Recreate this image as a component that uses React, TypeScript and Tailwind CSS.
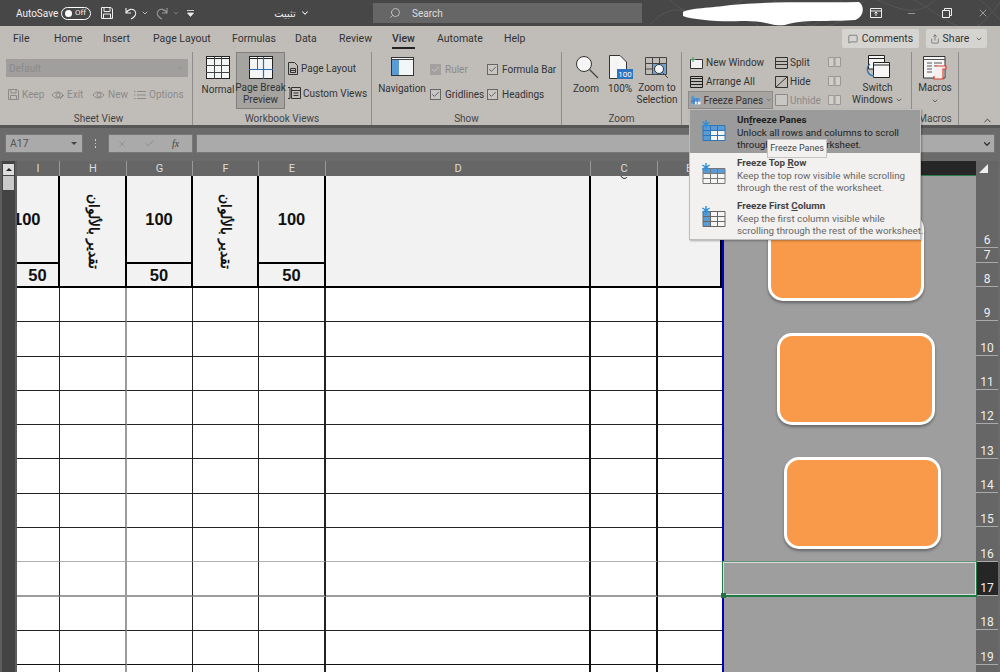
import React from 'react';
import { ChevronDown, Check, X, Search, Minus, MessageSquare, Share, ChevronUp } from 'lucide-react';

const GridIcon = ({ breakLines }: { breakLines?: boolean }) => (
  <svg width="24" height="23" viewBox="0 0 24 23" className="block">
    <rect x="0.5" y="0.5" width="23" height="22" fill="#f4f6f5" stroke="#222" />
    <path d="M0.5 2.5H23.5" stroke="#222" />
    {breakLines ? (
      <>
        <path d="M8.5 1V13" stroke="#333" strokeWidth="0.8" fill="none" />
        <path d="M14.5 1V23M0 13.5H24" stroke="#2d6db5" strokeWidth="1.2" fill="none" />
      </>
    ) : (
      <path d="M8.5 1V23M15.5 1V23M0 9.5H24M0 16.5H24" stroke="#444" fill="none" />
    )}
  </svg>
);

const CheckRow = ({ label, on = true, dim }: { label: string; on?: boolean; dim?: boolean }) => (
  <div className={`flex items-center gap-[4px] h-[25px] ${dim ? 'text-[#8c8a88]' : ''}`}>
    <span className={`w-[11px] h-[11px] border flex items-center justify-center ${dim ? 'bg-[#a3a19f] border-[#a3a19f]' : 'border-[#666] bg-[#c9c7c4]'}`}>
      {on && <Check size={9} strokeWidth={2} color={dim ? '#d0cecc' : '#444'} />}
    </span>
    <span>{label}</span>
  </div>
);

const Group = ({ label, width, children }: { label: string; width: string; children: React.ReactNode }) => (
  <div className={`${width} h-[73px] border-r border-[#8f8d8b] relative shrink-0`}>
    <div className="flex h-[58px]">{children}</div>
    <div className="absolute bottom-0 left-0 right-0 text-center text-[10px] leading-[12px] text-[#444]">{label}</div>
  </div>
);

const FreezeIcon = ({ kind }: { kind: 'all' | 'row' | 'col' }) => {
  const blue = '#5a9bd5';
  const stroke = kind === 'col' ? '#666' : kind === 'row' ? '#777' : '#2e75b6';
  return (
    <svg width="27" height="22" viewBox="0 0 27 22" className="block">
      <rect x="3" y="5.5" width="22" height="15" fill="#f5f5f3" />
      {kind !== 'col' && <rect x="3" y="5.5" width="22" height="5" fill={blue} />}
      {kind !== 'row' && <rect x="3" y="5.5" width="7.5" height="15" fill={blue} />}
      <path d="M3 5.5H25V20.5H3ZM10.5 5.5V20.5M17.5 5.5V20.5M3 10.5H25M3 15.5H25" stroke={stroke} fill="none" />
      <path d="M6 0V8.5M2.3 2L9.7 6.3M9.7 2L2.3 6.3" stroke="#2e8fd8" strokeWidth="1.4" />
    </svg>
  );
};

const MenuItem = ({ title, lines, kind, hot }: { title: React.ReactNode; lines: string[]; kind: 'all' | 'row' | 'col'; hot?: boolean }) => (
  <div className={`h-[43px] flex pt-[4px] ${hot ? 'bg-[#9b9b9b]' : ''}`}>
    <div className="w-[47px] pl-[10px] pt-[6px] shrink-0">
      <FreezeIcon kind={kind} />
    </div>
    <div className="text-[9.8px] leading-[12px]">
      <div className={`font-bold mb-[1px] ${hot ? 'text-[#222]' : 'text-[#444]'}`}>{title}</div>
      {lines.map(l => (
        <div key={l} className={`whitespace-nowrap ${hot ? 'text-[#222]' : 'text-[#666]'}`}>{l}</div>
      ))}
    </div>
  </div>
);

const tabs = [
  { label: 'File', w: 'w-[41px]' },
  { label: 'Home', w: 'w-[49px]' },
  { label: 'Insert', w: 'w-[50px]' },
  { label: 'Page Layout', w: 'w-[79px]' },
  { label: 'Formulas', w: 'w-[63px]' },
  { label: 'Data', w: 'w-[44px]' },
  { label: 'Review', w: 'w-[53px]' },
  { label: 'View', w: 'w-[45px]', on: true },
  { label: 'Automate', w: 'w-[67px]' },
  { label: 'Help', w: 'w-[30px]' },
];

const columns = [
  { label: 'I', w: 'w-[43px]' },
  { label: 'H', w: 'w-[67px]' },
  { label: 'G', w: 'w-[66px]' },
  { label: 'F', w: 'w-[66px]' },
  { label: 'E', w: 'w-[67px]' },
  { label: 'D', w: 'w-[265px]' },
  { label: 'C', w: 'w-[67px]' },
  { label: 'B', w: 'w-[64px]' },
];

// per column right border for the body rows
const bodyBorders = [
  'border-r border-r-[#222]',
  'border-r-2 border-r-[#9c9c9c]',
  'border-r border-r-[#222]',
  'border-r border-r-[#222]',
  'border-r-2 border-r-[#222]',
  'border-r-2 border-r-[#111]',
  'border-r-2 border-r-[#111]',
  '',
];

const rowLines = ['border-b-[#222]', 'border-b-[#222]', 'border-b-[#222]', 'border-b-[#222]', 'border-b-[#222]', 'border-b-[#222]', 'border-b-[#222]', 'border-b-[#b0b0b0]', 'border-b-2 border-b-[#9c9c9c]', 'border-b-[#222]', 'border-b-[#111]', 'border-b-[#222]'];

const rowHeads = [
  { n: '8', h: 'h-[24px]' },
  { n: '9', h: 'h-[34px]' },
  { n: '10', h: 'h-[35px]' },
  { n: '11', h: 'h-[34px]' },
  { n: '12', h: 'h-[34px]' },
  { n: '13', h: 'h-[35px]' },
  { n: '14', h: 'h-[34px]' },
  { n: '15', h: 'h-[34px]' },
  { n: '16', h: 'h-[35px]' },
  { n: '17', h: 'h-[34px]', on: true },
  { n: '18', h: 'h-[34px]' },
  { n: '19', h: 'h-[35px]' },
];

const headCell = 'bg-[#f2f2f2] border-r-2 border-b-2 border-[#000] flex items-center justify-center font-bold text-[#111] overflow-hidden';

const Shape = ({ cls }: { cls: string }) => (
  <div className={`absolute ${cls} bg-[#f99a4a] border-[3px] border-white rounded-[15px] shadow-[0_2px_3px_rgba(0,0,0,0.35)]`} />
);

export default function App() {
  return (
    <div className="relative w-[1000px] h-[672px] overflow-hidden flex flex-col bg-[#666] font-['Roboto','Open_Sans',sans-serif] text-[10px] text-[#333]">
      {/* title bar */}
      <div className="relative h-[26px] shrink-0 bg-[#474747] flex items-center text-[#f0f0f0] overflow-hidden">
        <svg width="350" height="26" viewBox="0 0 350 26" className="absolute right-0 top-0" fill="none" stroke="#565656">
          <path d="M0 25C30 -10 50 30 80 8S120 -5 140 14 190 30 210 5 260 -5 290 16 330 30 350 2" />
          <path d="M20 0C50 30 70 -5 100 20S170 30 190 2 250 28 280 4 330 -4 350 20" />
        </svg>
        <span className="ml-[16px] w-[45px]">AutoSave</span>
        <span className="w-[30px] h-[13px] border border-white rounded-full flex items-center pl-[3px] gap-[3px] text-[8px]">
          <span className="w-[7px] h-[7px] rounded-full bg-white" />Off
        </span>
        <svg width="14" height="14" viewBox="0 0 14 14" fill="none" stroke="#eee" className="ml-[9px]">
          <path d="M1.5 1.5H11L12.5 3V12.5H1.5ZM4 1.5V5.5H10V1.5M3.5 12.5V8H10.5V12.5" />
        </svg>
        <svg width="14" height="14" viewBox="0 0 14 14" fill="none" stroke="#eee" className="ml-[10px]">
          <path d="M2 2V7H7M2 7C4 3 9 2 11 5S11 11 7 13" strokeWidth="1.1" />
        </svg>
        <ChevronDown size={8} className="ml-[3px]" />
        <svg width="14" height="14" viewBox="0 0 14 14" fill="none" stroke="#999" className="ml-[6px]">
          <path d="M12 2V7H7M12 7C10 3 5 2 3 5S3 11 7 13" strokeWidth="1.1" />
        </svg>
        <ChevronDown size={8} className="ml-[3px] text-[#999]" />
        <svg width="9" height="9" viewBox="0 0 9 9" className="ml-[6px]">
          <path d="M1 1.5H8M1.5 4H7.5L4.5 7.5Z" stroke="#eee" strokeWidth="0.8" fill="#eee" />
        </svg>
        <span className="ml-[76px] w-[28px] text-center font-['Noto_Sans','DejaVu_Sans',sans-serif]" dir="rtl">تثبيت</span>
        <ChevronDown size={10} strokeWidth={2.5} className="ml-[1px]" />
        <div className="ml-[63px] w-[269px] h-[20px] bg-[#666] flex items-center text-[#ddd] shrink-0 relative">
          <Search size={12} className="ml-[16px] -scale-x-100" strokeWidth={1.4} />
          <span className="ml-[11px]">Search</span>
        </div>
        <svg width="184" height="26" viewBox="0 0 184 26" className="ml-[39px] shrink-0 relative">
          <path d="M2 12C8 8 30 8 50 5 90 1 130 3 178 2 184 6 183 17 174 20 150 22 120 19 104 25 90 27 86 20 60 21 40 22 12 20 2 16Z" fill="#fff" />
        </svg>
        <svg width="12" height="10" viewBox="0 0 12 10" fill="none" stroke="#eee" className="ml-[5px] shrink-0 relative">
          <path d="M0.5 0.5H11.5V9.5H0.5ZM0.5 3H11.5M6 4V8M4.5 5.5L6 4 7.5 5.5" />
        </svg>
        <Minus size={11} className="ml-[24px] shrink-0 relative" strokeWidth={1} />
        <svg width="10" height="10" viewBox="0 0 10 10" fill="none" stroke="#eee" className="ml-[25px] shrink-0 relative">
          <path d="M0.5 2.5H7.5V9.5H0.5ZM2.5 2.5V0.5H9.5V7.5H7.5" />
        </svg>
        <X size={12} className="ml-[25px] shrink-0 relative" strokeWidth={1} />
      </div>

      {/* ribbon */}
      <div className="h-[99px] shrink-0 bg-[#c0bdb9] relative">
        <div className="h-[26px] flex items-center pl-[13px] text-[10.5px] text-[#333]">
          {tabs.map(t => (
            <div key={t.label} className={t.w}>
              <span className={t.on ? 'relative font-medium' : ''}>
                {t.label}
                {t.on && <span className="absolute left-0 right-0 bottom-[-4px] h-[2px] bg-[#222]" />}
              </span>
            </div>
          ))}
          <div className="absolute left-[842px] top-[3px] flex items-center gap-[7px] text-[10.5px]">
            <div className="w-[77px] h-[19px] bg-[#d6d4d1] rounded-[2px] flex items-center justify-center gap-[4px]">
              <MessageSquare size={10} strokeWidth={1.2} />Comments
            </div>
            <div className="w-[61px] h-[19px] bg-[#d6d4d1] rounded-[2px] flex items-center justify-center gap-[3px]">
              <Share size={10} strokeWidth={1.2} />Share
              <ChevronDown size={8} className="ml-[3px]" />
            </div>
          </div>
        </div>

        <div className="flex pl-[5px] h-[73px]">
          <Group label="Sheet View" width="w-[188px]">
            <div className="pl-[1px] pt-[7px] text-[#8c8a88]">
              <div className="w-[182px] h-[18px] bg-[#a09f9d] flex items-center justify-between pl-[3px] pr-[4px]">
                Default <ChevronDown size={8} />
              </div>
              <div className="flex items-center mt-[9px] h-[17px] pl-[1px]">
                <span className="flex items-center gap-[2px] w-[44px]">
                  <svg width="13" height="13" viewBox="0 0 13 13" fill="none" stroke="#8c8a88"><path d="M1.5 1.5H10L11.5 3V11.5H1.5ZM4 1.5V5H9V1.5M3.5 11.5V7.5H9.5V11.5" /></svg>Keep
                </span>
                <span className="flex items-center gap-[2px] w-[41px]">
                  <svg width="14" height="10" viewBox="0 0 14 10" fill="none" stroke="#8c8a88"><path d="M1 5C4 1 9 1 12 5 9 9 4 9 1 5Z" /><circle cx="7" cy="5" r="2" /><path d="M9 9L13 5" /></svg>Exit
                </span>
                <span className="flex items-center gap-[2px] w-[42px]">
                  <svg width="14" height="10" viewBox="0 0 14 10" fill="none" stroke="#8c8a88"><path d="M1 5C4 1 9 1 12 5 9 9 4 9 1 5Z" /><circle cx="7" cy="5" r="2" /></svg>New
                </span>
                <span className="flex items-center gap-[3px]">
                  <svg width="12" height="10" viewBox="0 0 12 10" fill="none" stroke="#8c8a88"><path d="M3 1.5H12M3 5H12M3 8.5H12M0 1.5H1.5M0 5H1.5M0 8.5H1.5" /></svg>Options
                </span>
              </div>
            </div>
          </Group>
          <Group label="Workbook Views" width="w-[179px]">
            <div className="w-[36px] ml-[7px] flex flex-col items-center pt-[4px]">
              <GridIcon />
              <span className="mt-[3px]">Normal</span>
            </div>
            <div className="w-[49px] h-[57px] bg-[#a5a4a1] border border-[#807f7d] flex flex-col items-center pt-[3px] leading-[12px] text-center">
              <GridIcon breakLines />
              <span className="mt-[3px] whitespace-nowrap">Page Break</span>
              <span>Preview</span>
            </div>
            <div className="pl-[3px] pt-[7px]">
              <div className="flex items-center gap-[3px] h-[18px]">
                <svg width="10" height="13" viewBox="0 0 10 13" fill="none" stroke="#333"><path d="M0.5 0.5H6.5L9.5 3.5V12.5H0.5ZM2.5 6.5H7.5V10.5H2.5ZM2.5 8.5H7.5" /></svg>Page Layout
              </div>
              <div className="flex items-center gap-[2px] h-[18px] mt-[7px]">
                <svg width="13" height="14" viewBox="0 0 13 14" fill="none" stroke="#333"><path d="M3.5 1.5H12.5V12.5H3.5ZM3.5 4.5H12.5M5.5 7H10.5M5.5 9.5H10.5M0 1.5H2V12.5H0" /></svg>Custom Views
              </div>
            </div>
          </Group>
          <Group label="Show" width="w-[190px]">
            <div className="w-[46px] ml-[7px] flex flex-col items-center pt-[5px]">
              <svg width="23" height="19" viewBox="0 0 23 19"><rect x="0.5" y="0.5" width="22" height="18" fill="#f3f6f6" stroke="#333" /><rect x="1" y="3" width="7" height="15" fill="#5b9bd5" /><path d="M1 2.5H22" stroke="#444" /></svg>
              <span className="mt-[5px] whitespace-nowrap">Navigation</span>
            </div>
            <div className="ml-[5px] pt-[5px] w-[57px]">
              <CheckRow label="Ruler" dim />
              <CheckRow label="Gridlines" />
            </div>
            <div className="pt-[5px]">
              <CheckRow label="Formula Bar" />
              <CheckRow label="Headings" />
            </div>
          </Group>
          <Group label="Zoom" width="w-[120px]">
            <div className="w-[30px] ml-[9px] flex flex-col items-center pt-[3px]">
              <svg width="24" height="24" viewBox="0 0 24 24" fill="none" className="ml-[2px]"><circle cx="9" cy="9" r="7.5" fill="#f5f5f5" stroke="#333" /><path d="M14.5 14.5L23 23" stroke="#444" strokeWidth="1.2" /></svg>
              <span className="mt-[2px]">Zoom</span>
            </div>
            <div className="w-[28px] ml-[5px] flex flex-col items-center pt-[3px]">
              <svg width="24" height="24" viewBox="0 0 24 24" className="ml-[2px]">
                <path d="M0.5 0.5H11L17.5 7V23.5H0.5Z" fill="#f6f6f6" stroke="#333" />
                <rect x="8" y="14" width="16" height="10" fill="#2f74c0" />
                <text x="16" y="22" textAnchor="middle" fontSize="8" fill="#fff">100</text>
              </svg>
              <span className="mt-[2px]">100%</span>
            </div>
            <div className="w-[40px] ml-[3px] flex flex-col items-center pt-[5px] leading-[12px] text-center">
              <svg width="24" height="22" viewBox="0 0 24 22" fill="none"><path d="M0.5 0.5H21.5V17.5H0.5ZM0.5 6.5H21.5M7.5 0.5V17.5M14.5 0.5V6.5M0.5 12H8" stroke="#444" /><rect x="8" y="7" width="13" height="10" fill="#6ea3d8" /><circle cx="14" cy="12" r="4.5" fill="#f5f5f5" stroke="#333" /><path d="M17.5 15.5L23 21" stroke="#444" /></svg>
              <span className="mt-[3px] whitespace-nowrap">Zoom to</span>
              <span>Selection</span>
            </div>
          </Group>
          <Group label="" width="w-[230px]">
            <div className="w-[85px] ml-[6px] pt-[1px]">
              <div className="flex items-center gap-[3px] h-[19px] pl-[2px]">
                <svg width="13" height="12" viewBox="0 0 13 12" fill="none"><path d="M0.5 2.5H12.5V11.5H0.5Z" fill="#f3f3f3" stroke="#333" /><path d="M3 0V5M0.5 2.5H5.5" stroke="#3a9c55" /></svg>New Window
              </div>
              <div className="flex items-center gap-[3px] h-[19px] pl-[2px]">
                <svg width="13" height="12" viewBox="0 0 13 12" fill="none" stroke="#222"><path d="M0.5 0.5H12.5V11.5H0.5ZM0.5 2.5H12.5M0.5 5.5H12.5M0.5 8.5H12.5" /></svg>Arrange All
              </div>
              <div className="flex items-center gap-[3px] h-[18px] pl-[2px] bg-[#a5a4a1] border border-[#8c8b89] whitespace-nowrap">
                <svg width="13" height="12" viewBox="0 0 13 12" fill="none"><rect x="0" y="3" width="13" height="9" fill="#f5f5f5" /><path d="M0 3H13V7H5V12H0Z" fill="#5b9bd5" /><path d="M4.5 3V12M8.5 3V12M0 7.5H13" stroke="#2d6db5" /><path d="M2.5 0V4M0.5 2H4.5" stroke="#2e8fd8" /></svg>
                Freeze Panes <ChevronDown size={8} />
              </div>
            </div>
            <div className="w-[51px] ml-[2px] pt-[1px]">
              <div className="flex items-center gap-[2px] h-[19px]">
                <svg width="13" height="12" viewBox="0 0 13 12" fill="none" stroke="#333"><path d="M0.5 0.5H12.5V11.5H0.5ZM0.5 4.5H12.5M0.5 7.5H12.5" /></svg>Split
              </div>
              <div className="flex items-center gap-[2px] h-[19px]">
                <svg width="13" height="12" viewBox="0 0 13 12" fill="none" stroke="#333"><path d="M0.5 0.5H12.5V11.5H0.5ZM1 11L12 1" /></svg>Hide
              </div>
              <div className="flex items-center gap-[2px] h-[18px] text-[#8c8a88]">
                <svg width="13" height="12" viewBox="0 0 13 12" fill="#c9c7c4" stroke="#8c8a88"><path d="M0.5 0.5H12.5V11.5H0.5Z" /></svg>Unhide
              </div>
            </div>
            <div className="w-[24px] ml-[2px] pt-[3px] flex flex-col gap-[7px]">
              {[0, 1, 2].map(i => (
                <svg key={i} width="13" height="12" viewBox="0 0 13 12" fill="#d0cecb" stroke="#9a9896"><path d="M0.5 2.5H6V11.5H0.5ZM7 2.5H12.5V11.5H7Z" /></svg>
              ))}
            </div>
            <div className="w-[51px] flex flex-col items-center pt-[3px] leading-[12px] text-center">
              <svg width="24" height="25" viewBox="0 0 24 25" fill="none"><path d="M2.5 0.5H18.5V14H2.5ZM2.5 3.5H18.5" fill="#f5f5f5" stroke="#222" /><path d="M7.5 7.5H23.5V22.5H7.5Z" fill="#f5f5f5" stroke="#222" /><path d="M7.5 10H23.5" stroke="#222" /><path d="M4 9C0 12 0 20 8 21" stroke="#2e75b6" strokeWidth="1.3" /></svg>
              <span className="mt-[2px]">Switch</span>
              <span className="flex items-center gap-[2px] whitespace-nowrap">Windows <ChevronDown size={8} /></span>
            </div>
          </Group>
          <Group label="Macros" width="w-[47px]">
            <div className="w-full flex flex-col items-center pt-[4px] leading-[12px]">
              <svg width="24" height="24" viewBox="0 0 24 24" fill="none"><path d="M0.5 0.5H22V22H0.5Z" fill="#f5f5f5" stroke="#333" /><path d="M0.5 3.5H22M4 7H9M11 7H19M4 10H9M11 10H14M4 13H9M4 16H9" stroke="#555" /><path d="M12 10H23V13H20V23H11V20" fill="#f5f0ef" stroke="#d8402c" strokeWidth="1.2" /></svg>
              <span className="mt-[2px]">Macros</span>
              <ChevronDown size={8} className="mt-[3px]" />
            </div>
          </Group>
        </div>
        <ChevronUp size={11} className="absolute left-[982px] top-[89px] text-[#333]" />
      </div>

      {/* formula bar */}
      <div className="h-[36px] shrink-0 bg-[#6b6b6b] border-t-[3px] border-[#565656] flex items-start pt-[6px] pl-[5px] text-[#555]">
        <div className="w-[78px] h-[19px] bg-[#aaa] border border-[#777] flex items-center justify-between pl-[4px] pr-[5px] text-[10.5px]">
          A17
          <span className="w-0 h-0 border-l-[3px] border-r-[3px] border-t-[3px] border-l-transparent border-r-transparent border-t-[#444]" />
        </div>
        <div className="w-[25px] h-[19px] flex flex-col items-center justify-center gap-[2px]">
          <span className="w-[1.5px] h-[1.5px] bg-[#ccc]" /><span className="w-[1.5px] h-[1.5px] bg-[#ccc]" /><span className="w-[1.5px] h-[1.5px] bg-[#ccc]" />
        </div>
        <div className="w-[85px] h-[19px] bg-[#aaa] border border-[#777] flex items-center pl-[8px] gap-[17px] text-[#888]">
          <X size={10} strokeWidth={1.6} />
          <Check size={11} strokeWidth={1.8} />
          <span className="font-['Liberation_Serif',serif] italic text-[#444] text-[10px] leading-none">fx</span>
        </div>
        <div className="ml-[3px] w-[799px] h-[19px] bg-[#aaa] border border-[#777] flex items-center justify-end pr-[2px]">
          <ChevronDown size={10} strokeWidth={3} className="text-[#333]" />
        </div>
      </div>

      {/* sheet */}
      <div className="flex-1 flex min-h-0">
        <div className="w-[17px] shrink-0 bg-[#444] border-l-[2px] border-r-[2px] border-[#5d5d5d] flex flex-col pt-[3px] items-center">
          <div className="w-[11px] h-[11px] bg-[#ddd] flex items-center justify-center">
            <span className="w-0 h-0 border-l-[3px] border-r-[3px] border-b-[3px] border-l-transparent border-r-transparent border-b-[#222]" />
          </div>
          <div className="w-[11px] h-[14px] mt-[1px] bg-[#c9c9c9]" />
        </div>
        <div className="w-[705px] shrink-0 flex flex-col">
          <div className="h-[15px] flex bg-[#666] text-[#ddd] text-[11px] leading-[15px]">
            {columns.map(c => (
              <div key={c.label} className={`${c.w} text-center border-r border-[#999]`}>{c.label}</div>
            ))}
          </div>
          <div className="flex-1 bg-white grid grid-cols-[43px_67px_66px_66px_67px_265px_67px_64px] grid-rows-[88px_24px] auto-rows-[34.3px] overflow-hidden font-['Liberation_Sans',sans-serif] text-[16.5px]">
            <div className={`${headCell} justify-start`}><span className="-ml-[4px]">100</span></div>
            <div className={`${headCell} row-span-2 text-[13.5px] [writing-mode:vertical-rl]`}>تقدير بالألوان</div>
            <div className={headCell}>100</div>
            <div className={`${headCell} row-span-2 text-[13.5px] [writing-mode:vertical-rl]`}>تقدير بالألوان</div>
            <div className={headCell}>100</div>
            <div className={`${headCell} row-span-2`} />
            <div className={`${headCell} row-span-2 relative`}>
              <svg width="8" height="4" viewBox="0 0 8 4" fill="none" stroke="#222" className="absolute top-0 left-[29px]"><path d="M1 0C2 3 6 3 7 1" /></svg>
            </div>
            <div className={`${headCell} row-span-2 border-r-0`} />
            <div className={headCell}>50</div>
            <div className={headCell}>50</div>
            <div className={headCell}>50</div>
            {rowLines.flatMap((line, r) =>
              bodyBorders.map((b, c) => (
                <div key={`${r}-${c}`} className={`border-b ${line} ${b}`} />
              ))
            )}
          </div>
        </div>

        <div className="w-[2px] shrink-0 bg-[#0000c8] mt-[15px]" />

        <div className="w-[252px] shrink-0 flex flex-col">
          <div className="h-[15px] shrink-0 bg-[#262626] border-b border-[#2e7d4f]" />
          <div className="flex-1 bg-[#9e9e9e] relative">
            <Shape cls="left-[44px] top-[38px] w-[156px] h-[87px]" />
            <Shape cls="left-[53px] top-[157px] w-[158px] h-[92px]" />
            <Shape cls="left-[60px] top-[281px] w-[157px] h-[92px]" />
            {/* selected row 17 */}
            <div className="absolute left-[-2px] right-[-1px] top-[385px] h-[36px] border border-[#5f8f75] border-b-2 border-b-[#1f7a46] border-r-[#1f7a46] border-l-[#1f7a46]">
              <div className="w-full h-full border border-[#dcdcdc]" />
              <span className="absolute left-[-2px] bottom-[-3px] w-[5px] h-[5px] bg-[#217346]" />
            </div>
          </div>
        </div>

        <div className="w-[22px] shrink-0 flex flex-col text-[#eee] text-[12px] bg-[#666]">
          <div className="h-[15px] shrink-0 flex justify-start items-end pb-[3px] pl-[3px]">
            <span className="w-0 h-0 border-b-[9px] border-l-[9px] border-b-[#eee] border-l-transparent" />
          </div>
          <div className="h-[72px] border-b border-[#aaa] flex items-end justify-center leading-[13px]">6</div>
          <div className="h-[15px] border-b border-[#aaa] flex items-end justify-center leading-[13px]">7</div>
          {rowHeads.map(r => (
            <div key={r.n} className={`${r.h} border-b border-[#aaa] flex items-end justify-center leading-[13px] ${r.on ? 'bg-[#262626]' : ''}`}>{r.n}</div>
          ))}
        </div>
        <div className="flex-1 bg-[#6a6a6a]" />
      </div>

      {/* freeze panes menu */}
      <div className="absolute left-[689px] top-[109px] w-[232px] h-[131px] bg-[#f2f1ef] border border-[#bdbdbd] shadow-[1px_1px_2px_rgba(0,0,0,0.3)]">
        <MenuItem hot kind="all" title={<>Un<u>f</u>reeze Panes</>} lines={['Unlock all rows and columns to scroll', 'through all of the worksheet.']} />
        <MenuItem kind="row" title={<>Freeze Top <u>R</u>ow</>} lines={['Keep the top row visible while scrolling', 'through the rest of the worksheet.']} />
        <MenuItem kind="col" title={<>Freeze First <u>C</u>olumn</>} lines={['Keep the first column visible while', 'scrolling through the rest of the worksheet.']} />
      </div>
      <div className="absolute left-[767px] top-[139px] w-[60px] h-[19px] bg-[#f2f1ef] border border-[#c4c4c4] flex items-center justify-center text-[9px] whitespace-nowrap text-[#444]">
        Freeze Panes
      </div>
    </div>
  );
}
